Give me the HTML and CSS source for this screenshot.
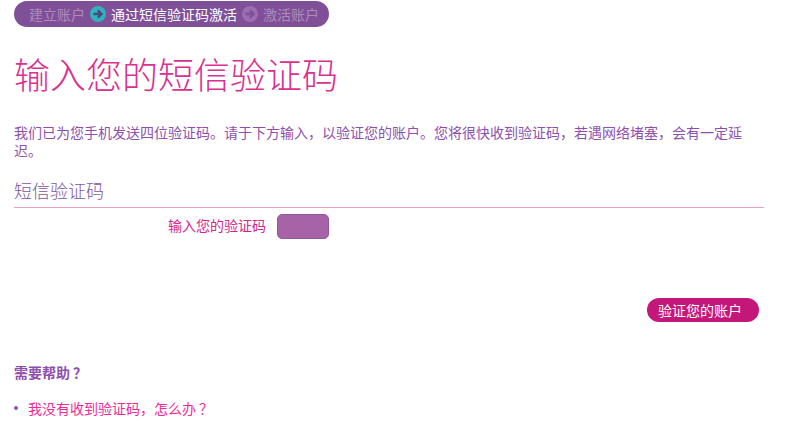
FILE: index.html
```html
<!DOCTYPE html>
<html lang="zh-CN">
<head>
<meta charset="utf-8">
<title>输入您的短信验证码</title>
<link rel="stylesheet" href="styles.css">
</head>
<body>
<div class="page">
  <ol class="steps">
    <li class="step">建立账户</li>
    <li class="arrow"><svg viewBox="0 0 16 16" width="16" height="16"><circle cx="8" cy="8" r="8" fill="#2fb3bd"/><path d="M3.5 8H11M7.8 4.3 11.5 8l-3.7 3.7" fill="none" stroke="#4a4a7a" stroke-width="2.4"/></svg></li>
    <li class="step step-on">通过短信验证码激活</li>
    <li class="arrow"><svg viewBox="0 0 16 16" width="16" height="16"><circle cx="8" cy="8" r="8" fill="#9a6cb0"/><path d="M3.5 8H11M7.8 4.3 11.5 8l-3.7 3.7" fill="none" stroke="#7f4f98" stroke-width="2.4"/></svg></li>
    <li class="step">激活账户</li>
  </ol>
  <h1 class="title">输入您的短信验证码</h1>
  <p class="intro">我们已为您手机发送四位验证码。请于下方输入，以验证您的账户。您将很快收到验证码，若遇网络堵塞，会有一定延迟。</p>
  <h2 class="section">短信验证码</h2>
  <div class="field">
    <label class="label" for="code">输入您的验证码</label>
    <input class="code" id="code" type="text">
  </div>
  <div class="actions"><a class="btn" href="#">验证您的账户</a></div>
  <h3 class="help">需要帮助<span class="qm">？</span></h3>
  <ul class="links"><li><a href="#">我没有收到验证码，怎么办<span class="qm">？</span></a></li></ul>
</div>
</body>
</html>
```
FILE: styles.css
```css
html, body { margin: 0; padding: 0; background: #fff; }
body { font-family: "Noto Sans CJK SC", "Liberation Sans", sans-serif; font-size: 14px; font-weight: 400; overflow: hidden; }
.page { width: 750px; padding: 1px 0 0 14px; height: 430px; }
.steps { list-style: none; margin: 0; padding: 0 0 0 15px; width: 315px; box-sizing: border-box; height: 26px; border-radius: 13px; background: #7f4f98; display: flex; align-items: center; color: #ab8dbd; line-height: 26px; }
.step { white-space: nowrap; }
.step-on { color: #fff; }
.arrow { display: flex; margin: 0 5px; }
.title { margin: 22px 0 0; font-size: 36px; font-weight: 300; line-height: 48px; color: #d9318f; white-space: nowrap; }
.intro { margin: 26px 0 0; line-height: 18px; color: #8e4fae; }
.section { margin: 17px 0 0; font-size: 18px; font-weight: 300; line-height: 28px; height: 31px; color: #7f55a0; border-bottom: 1px solid #e8a4bf; }
.field { display: flex; align-items: center; margin-top: 6px; }
.label { width: 252px; text-align: right; color: #d6288a; padding-bottom: 4px; }
.code { margin: 0 0 0 11px; width: 52px; height: 25px; box-sizing: border-box; border: 1px solid #8d5a9d; border-radius: 5px; background: #a663a8; padding: 0; }
.actions { display: flex; justify-content: flex-end; margin-top: 59px; padding-right: 5px; }
.btn { display: block; width: 112px; height: 24px; line-height: 24px; border-radius: 12px; background: #c4177a; color: #fff; text-decoration: none; box-sizing: border-box; padding-left: 11px; }
.help { margin: 40px 0 0; font-size: 14px; font-weight: 700; line-height: 20px; color: #8e4fae; }
.links { list-style: none; margin: 16px 0 0; padding: 0; }
.links li { display: flex; align-items: center; line-height: 20px; }
.links li::before { content: ""; width: 4px; height: 4px; border-radius: 50%; background: #8e4fae; margin: 0 10px 0 0; }
.links a { color: #ee2a96; text-decoration: none; }
.qm { margin-left: 3px; }
```
